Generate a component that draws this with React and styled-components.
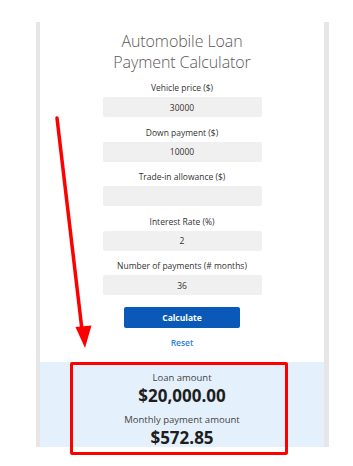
import React from 'react';
import styled, { createGlobalStyle } from 'styled-components';

const GlobalStyle = createGlobalStyle`
  html, body {
    margin: 0;
    padding: 0;
    background: #ffffff;
  }
  body {
    font-family: "Open Sans", "Noto Sans", sans-serif;
    -webkit-font-smoothing: antialiased;
  }
`;

const fields = [
  { label: 'Vehicle price ($)', value: '30000' },
  { label: 'Down payment ($)', value: '10000' },
  { label: 'Trade-in allowance ($)', value: '' },
  { label: 'Interest Rate (%)', value: '2' },
  { label: 'Number of payments (# months)', value: '36' },
];

export default function App() {
  return (
    <>
      <GlobalStyle />
      <Page>
        <Panel>
          <Form>
            <Title>
              Automobile Loan
              <br />
              Payment Calculator
            </Title>

            {fields.map((field) => (
              <Field key={field.label}>
                <Label>{field.label}</Label>
                <Input type="text" value={field.value} readOnly />
              </Field>
            ))}

            <CalcButton type="button">Calculate</CalcButton>
            <ResetLink href="#">Reset</ResetLink>
          </Form>

          <Results>
            <ResultLabel>Loan amount</ResultLabel>
            <ResultValue>$20,000.00</ResultValue>
            <ResultLabel $spaced>Monthly payment amount</ResultLabel>
            <ResultValue>$572.85</ResultValue>
          </Results>
        </Panel>

        <Highlight />
        <Arrow viewBox="0 0 353 466" aria-hidden="true">
          <line x1="57" y1="118" x2="82" y2="330" stroke="#ff0000" strokeWidth="3.5" strokeLinecap="round" />
          <polygon points="75.5,327 91.5,325.5 85,348" fill="#ff0000" />
        </Arrow>
      </Page>
    </>
  );
}

const Page = styled.div`
  position: relative;
  width: 353px;
  height: 466px;
  padding: 22px 0 0 36px;
  box-sizing: border-box;
`;

const Panel = styled.div`
  width: 284px;
  border-left: 4px solid #e6e6e6;
  border-right: 5px solid #e6e6e6;
  background: #ffffff;
  display: flex;
  flex-direction: column;
`;

const Form = styled.div`
  display: flex;
  flex-direction: column;
  align-items: center;
  padding: 9px 0 13px;
`;

const Title = styled.h1`
  margin: 0 0 9px;
  font-size: 16px;
  line-height: 21px;
  font-weight: 300;
  color: #5a5a5a;
  text-align: center;
  letter-spacing: -0.1px;
`;

const Field = styled.div`
  display: flex;
  flex-direction: column;
  align-items: center;
  margin-bottom: 9.5px;
`;

const Label = styled.label`
  font-size: 8.5px;
  line-height: 12px;
  font-weight: 500;
  color: #333333;
  margin-bottom: 3px;
`;

const Input = styled.input`
  width: 159px;
  height: 20px;
  box-sizing: border-box;
  border: none;
  border-radius: 2px;
  background: #f0f0f0;
  text-align: center;
  font-family: inherit;
  font-size: 8.5px;
  font-weight: 500;
  color: #333333;
  padding: 0;
  outline: none;
`;

const CalcButton = styled.button`
  margin-top: 2.5px;
  width: 116px;
  height: 21px;
  border: none;
  border-radius: 2px;
  background: #0a59b8;
  color: #ffffff;
  font-family: inherit;
  font-size: 8.5px;
  font-weight: 700;
  padding: 0;
`;

const ResetLink = styled.a`
  margin-top: 9px;
  font-size: 8.5px;
  line-height: 12px;
  font-weight: 600;
  color: #2f7fe0;
  text-decoration: none;
`;

const Results = styled.div`
  background: #e4f0fb;
  height: 85px;
  box-sizing: border-box;
  padding-top: 10px;
  display: flex;
  flex-direction: column;
  align-items: center;
`;

const ResultLabel = styled.div`
  font-size: 9.5px;
  line-height: 12px;
  color: #444444;
  margin-top: ${(p) => (p.$spaced ? '8px' : '0')};
`;

const ResultValue = styled.div`
  font-size: 17px;
  line-height: 20px;
  font-weight: 700;
  color: #1e1e1e;
  margin-top: 2px;
`;

const Highlight = styled.div`
  position: absolute;
  left: 70px;
  top: 362px;
  width: 218px;
  height: 93px;
  box-sizing: border-box;
  border: 3px solid #ff0000;
  border-radius: 2px;
  pointer-events: none;
`;

const Arrow = styled.svg`
  position: absolute;
  left: 0;
  top: 0;
  width: 353px;
  height: 466px;
  pointer-events: none;
`;
